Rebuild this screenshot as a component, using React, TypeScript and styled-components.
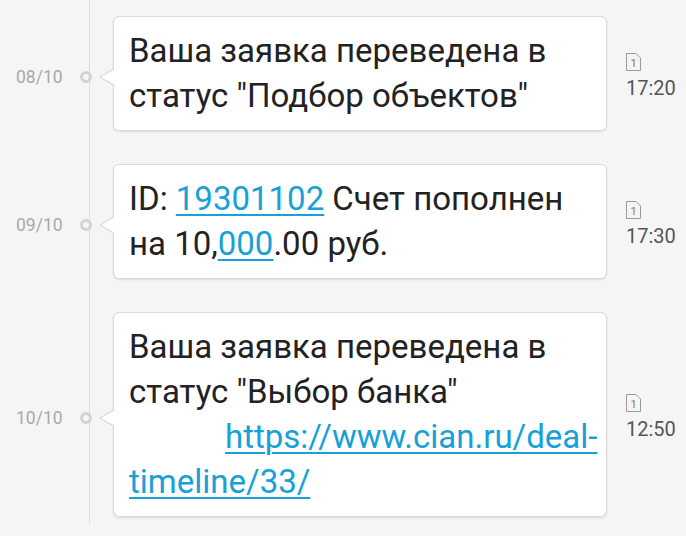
import React from "react";
import styled, { createGlobalStyle } from "styled-components";

const Global = createGlobalStyle`
  html, body { margin: 0; padding: 0; background: #f5f5f5; }
  body { font-family: Roboto, "Noto Sans", Arial, sans-serif; }
`;

const Timeline = styled.div`
  position: relative;
  width: 686px;
  height: 536px;
  box-sizing: border-box;
  padding-top: 16px;
  display: flex;
  flex-direction: column;
  gap: 33px;
  overflow: hidden;
  &::before {
    content: "";
    position: absolute;
    left: 89px;
    top: 0;
    height: 525px;
    width: 1px;
    background: #dedede;
  }
`;

const Row = styled.div`
  display: flex;
  align-items: center;
`;

const DateCell = styled.div`
  width: 92px;
  box-sizing: border-box;
  padding-left: 16px;
  margin-top: 7px;
  display: flex;
  align-items: center;
  justify-content: space-between;
  flex-shrink: 0;
`;

const DateText = styled.span`
  font-size: 17.5px;
  color: #a9a9a9;
`;

const Dot = styled.span`
  position: relative;
  z-index: 1;
  width: 6px;
  height: 6px;
  border-radius: 50%;
  border: 3px solid #d3d3d3;
  background: #f5f5f5;
`;

const Bubble = styled.div`
  position: relative;
  margin-left: 21px;
  width: 494px;
  box-sizing: border-box;
  background: #fff;
  border: 1px solid #d9d9d9;
  border-radius: 6px;
  box-shadow: 0 1px 2px rgba(0, 0, 0, 0.1);
  padding: 11px 4px 12px 15px;
  font-size: 33px;
  line-height: 45px;
  color: #222;
  flex-shrink: 0;
  &::before {
    content: "";
    position: absolute;
    left: -15px;
    top: calc(50% + 3px);
    transform: translateY(-50%);
    border-style: solid;
    border-width: 9px 15px 9px 0;
    border-color: transparent #d9d9d9 transparent transparent;
  }
  &::after {
    content: "";
    position: absolute;
    left: -13px;
    top: calc(50% + 3px);
    transform: translateY(-50%);
    border-style: solid;
    border-width: 8px 14px 8px 0;
    border-color: transparent #fff transparent transparent;
  }
`;

const Link = styled.a`
  color: #17a1d6;
  text-decoration: underline;
  text-decoration-thickness: 2px;
  text-underline-offset: 4px;
`;

const Indent = styled.span`
  display: inline-block;
  width: 96px;
`;

const Meta = styled.div`
  margin-left: 19px;
  margin-top: 6px;
  display: flex;
  flex-direction: column;
  align-items: flex-start;
  gap: 6px;
`;

const Sim = styled.span`
  position: relative;
  width: 15px;
  height: 18px;
  display: flex;
  align-items: center;
  justify-content: center;
  font-size: 11px;
  color: #7a7a7a;
  svg {
    position: absolute;
    inset: 0;
  }
`;

const SimNum = styled.span`
  position: relative;
  margin-top: 2px;
`;

const Time = styled.span`
  font-size: 20px;
  line-height: 23px;
  color: #555;
`;

const SimIcon = () => (
  <Sim>
    <svg width="15" height="18" viewBox="0 0 15 18">
      <path d="M0.5 0.5 H10 L14.5 5 V17.5 H0.5 Z" fill="none" stroke="#9a9a9a" strokeWidth="1" />
    </svg>
    <SimNum>1</SimNum>
  </Sim>
);

type Item = { date: string; time: string; content: React.ReactNode };

const items: Item[] = [
  {
    date: "08/10",
    time: "17:20",
    content: <>Ваша заявка переведена в статус "Подбор объектов"</>,
  },
  {
    date: "09/10",
    time: "17:30",
    content: (
      <>
        ID: <Link>19301102</Link> Счет пополнен на 10,<Link>000</Link>.00 руб.
      </>
    ),
  },
  {
    date: "10/10",
    time: "12:50",
    content: (
      <>
        Ваша заявка переведена в статус "Выбор банка"
        <br />
        <Indent />
        <Link>https://www.cian.ru/deal-timeline/33/</Link>
      </>
    ),
  },
];

export default function App() {
  return (
    <>
      <Global />
      <Timeline>
        {items.map((it) => (
          <Row key={it.date}>
            <DateCell>
              <DateText>{it.date}</DateText>
              <Dot />
            </DateCell>
            <Bubble>{it.content}</Bubble>
            <Meta>
              <SimIcon />
              <Time>{it.time}</Time>
            </Meta>
          </Row>
        ))}
      </Timeline>
    </>
  );
}
